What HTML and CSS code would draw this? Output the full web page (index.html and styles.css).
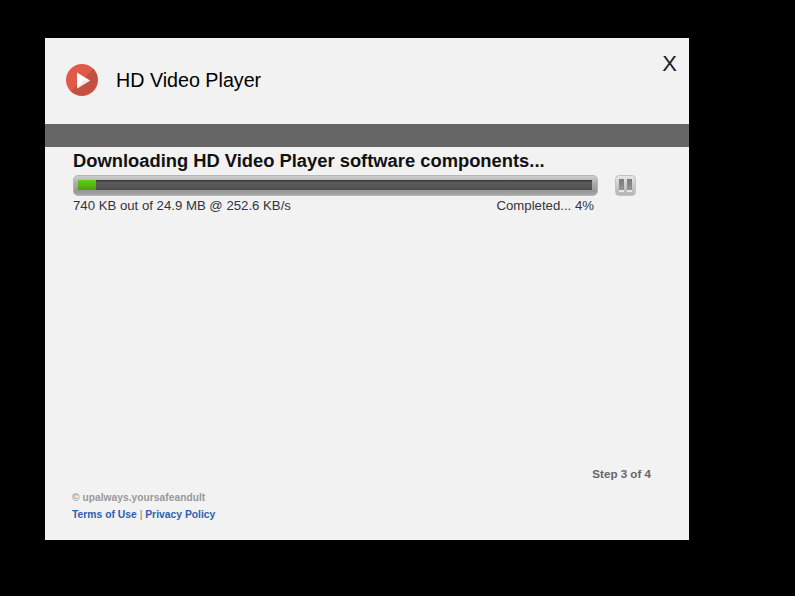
FILE: index.html
```html
<!DOCTYPE html>
<html lang="en">
<head>
<meta charset="utf-8">
<title>HD Video Player</title>
<link rel="stylesheet" href="styles.css">
</head>
<body>
<main class="panel">
  <header class="header">
    <svg class="logo" width="32" height="32" viewBox="0 0 32 32" aria-hidden="true">
      <circle cx="16" cy="16" r="16" fill="#e05a4a"/>
      <path d="M27.3 4.7 A16 16 0 0 1 4.7 27.3 Z" fill="#c4513f"/>
      <path d="M11 8.5 L24 16.5 L11 24.5 Z" fill="#fdfdfd"/>
      <path d="M11 24.5 L24 16.5 L18 16 Z" fill="#ecebea"/>
    </svg>
    <h1 class="app-name">HD Video Player</h1>
    <span class="close">X</span>
  </header>
  <div class="band"></div>
  <section class="content">
    <h2 class="heading">Downloading HD Video Player software components...</h2>
    <div class="progress-row">
      <div class="track"><div class="bar"><div class="fill"></div></div></div>
      <button class="pause" type="button" aria-label="Pause"><span class="pause-bar"></span><span class="pause-bar"></span></button>
    </div>
    <div class="stats"><span>740 KB out of 24.9 MB @ 252.6 KB/s</span><span>Completed... 4%</span></div>
  </section>
  <div class="step">Step 3 of 4</div>
  <footer class="footer">
    <div class="copy">© upalways.yoursafeandult</div>
    <div class="links"><a href="#">Terms of Use</a> <span class="sep">|</span> <a href="#">Privacy Policy</a></div>
  </footer>
</main>
</body>
</html>
```
FILE: styles.css
```css
* { box-sizing: border-box; }
html, body { margin: 0; height: 100%; }
body {
  background: #000;
  padding: 38px 0 0 45px;
  font-family: "Liberation Sans", Arial, sans-serif;
  overflow: hidden;
}
.panel {
  width: 644px;
  height: 502px;
  background: #f2f2f2;
  display: flex;
  flex-direction: column;
}
.header {
  height: 86px;
  display: flex;
  align-items: center;
  padding: 0 0 2px 21px;
  position: relative;
}
.logo { flex: none; }
.app-name {
  margin: 0 0 0 18px;
  font-size: 19.7px;
  font-weight: 400;
  color: #000;
}
.close {
  position: absolute;
  top: 14px;
  right: 12px;
  font-size: 22px;
  line-height: 24px;
  color: #1a1a2a;
}
.band { height: 23px; background: #666; }
.content { padding: 4px 0 0 28px; }
.heading {
  margin: 0;
  font-size: 18.35px;
  line-height: 20px;
  font-weight: 700;
  color: #111;
}
.progress-row {
  display: flex;
  align-items: center;
  margin-top: 4px;
}
.track {
  width: 525px;
  height: 21px;
  padding: 4px 5px 5px 4px;
  border-radius: 5px;
  background: linear-gradient(#cdcdcd, #a8a8a8 45%, #989898 80%, #a6a6a6);
  border: 1px solid #b5b5b5;
}
.bar {
  height: 10px;
  background: linear-gradient(#333, #5a5a5a 25%, #555 75%, #4a4a4a);
}
.fill {
  width: 18px;
  height: 100%;
  background: linear-gradient(#62cc1a, #57b812 50%, #44a408);
}
.pause {
  width: 21px;
  height: 21px;
  margin-left: 17px;
  padding: 0;
  border: 1px solid #c4c4c4;
  border-radius: 4px;
  background: linear-gradient(#e6e6e6, #b4b4b4);
  display: flex;
  justify-content: center;
  align-items: center;
  gap: 3px;
}
.pause-bar {
  width: 5px;
  height: 13px;
  background: linear-gradient(#7c7c7c, #949494 85%, #e8e8e8 85%);
}
.stats {
  width: 521px;
  display: flex;
  justify-content: space-between;
  margin-top: 2px;
  font-size: 13.2px;
  line-height: 16px;
  color: #33333d;
}
.step {
  margin-top: auto;
  padding-right: 38px;
  text-align: right;
  font-size: 11.6px;
  line-height: 14px;
  font-weight: 700;
  color: #666;
}
.footer {
  margin-top: 11px;
  padding: 0 0 19px 27px;
  font-weight: 700;
}
.copy { font-size: 10.2px; line-height: 12px; letter-spacing: 0.05px; color: #999; }
.links { font-size: 10.35px; margin-top: 5px; line-height: 12px; }
.links a { color: #2f5fb0; text-decoration: none; }
.sep { color: #777; font-weight: 400; }
```
